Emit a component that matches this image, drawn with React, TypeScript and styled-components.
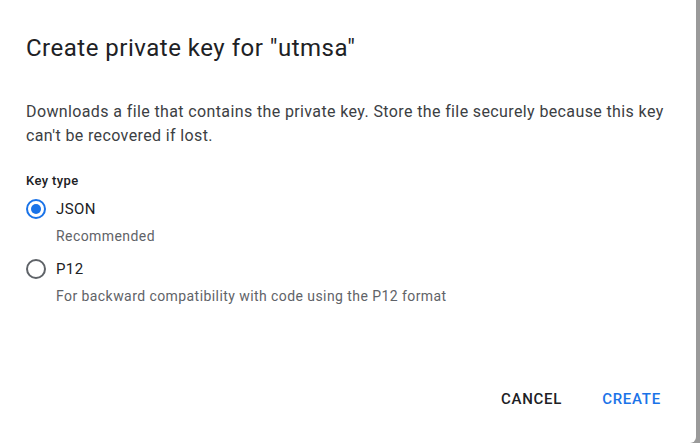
import React, { useState } from "react";
import styled, { createGlobalStyle } from "styled-components";

const GlobalStyle = createGlobalStyle`
  html, body {
    margin: 0;
    padding: 0;
    background: #9e9e9e;
    font-family: Roboto, "Noto Sans", Arial, sans-serif;
  }
`;

const Backdrop = styled.div`
  width: 700px;
  height: 443px;
  background: #9a9a9a;
  overflow: hidden;
`;

const Dialog = styled.div`
  width: 696px;
  height: 443px;
  background: #ffffff;
  border-radius: 0 0 6px 0;
  box-sizing: border-box;
  padding: 32px 26px 0 26px;
  display: flex;
  flex-direction: column;
`;

const Title = styled.h2`
  margin: 0;
  font-size: 24px;
  font-weight: 400;
  line-height: 32px;
  letter-spacing: 0.5px;
  color: #202124;
`;

const Description = styled.p`
  margin: 36px 0 0 0;
  font-size: 16px;
  line-height: 24px;
  letter-spacing: 0.38px;
  color: #3c4043;
  max-width: 640px;
`;

const FieldLabel = styled.div`
  margin-top: 23px;
  font-size: 13px;
  font-weight: 500;
  line-height: 20px;
  letter-spacing: 0.38px;
  color: #202124;
`;

const Options = styled.div`
  display: flex;
  flex-direction: column;
  margin-top: 1px;
`;

const Option = styled.label`
  display: flex;
  flex-direction: column;
  cursor: pointer;
`;

const OptionRow = styled.div`
  display: flex;
  align-items: center;
  height: 34px;
  gap: 10px;
`;

const RadioCircle = styled.span<{ $checked: boolean }>`
  width: 20px;
  height: 20px;
  box-sizing: border-box;
  border-radius: 50%;
  border: 2px solid ${(p) => (p.$checked ? "#1a73e8" : "#5f6368")};
  display: flex;
  align-items: center;
  justify-content: center;

  &::after {
    content: "";
    width: 10px;
    height: 10px;
    border-radius: 50%;
    background: #1a73e8;
    display: ${(p) => (p.$checked ? "block" : "none")};
  }
`;

const OptionText = styled.span`
  font-size: 15px;
  letter-spacing: 0.4px;
  color: #202124;
`;

const Hint = styled.div`
  padding-left: 30px;
  font-size: 14px;
  line-height: 20px;
  letter-spacing: 0.43px;
  color: #5f6368;
  margin-bottom: 6px;
`;

const Actions = styled.div`
  margin-top: auto;
  display: flex;
  justify-content: flex-end;
  gap: 8px;
  padding-bottom: 26px;
  margin-right: -7px;
`;

const TextButton = styled.button<{ $primary?: boolean }>`
  background: none;
  border: none;
  font-family: inherit;
  font-size: 15px;
  font-weight: 500;
  letter-spacing: 0.75px;
  padding: 0 16px;
  height: 36px;
  border-radius: 4px;
  cursor: pointer;
  color: ${(p) => (p.$primary ? "#1a73e8" : "#202124")};
`;

const keyTypes = [
  { id: "json", label: "JSON", hint: "Recommended" },
  { id: "p12", label: "P12", hint: "For backward compatibility with code using the P12 format" },
];

const App = () => {
  const [keyType, setKeyType] = useState("json");

  return (
    <Backdrop>
      <GlobalStyle />
      <Dialog>
        <Title>Create private key for "utmsa"</Title>
        <Description>
          Downloads a file that contains the private key. Store the file securely because this key
          can't be recovered if lost.
        </Description>
        <FieldLabel>Key type</FieldLabel>
        <Options>
          {keyTypes.map((k) => (
            <Option key={k.id} onClick={() => setKeyType(k.id)}>
              <OptionRow>
                <RadioCircle $checked={keyType === k.id} />
                <OptionText>{k.label}</OptionText>
              </OptionRow>
              <Hint>{k.hint}</Hint>
            </Option>
          ))}
        </Options>
        <Actions>
          <TextButton>CANCEL</TextButton>
          <TextButton $primary>CREATE</TextButton>
        </Actions>
      </Dialog>
    </Backdrop>
  );
};

export default App;
